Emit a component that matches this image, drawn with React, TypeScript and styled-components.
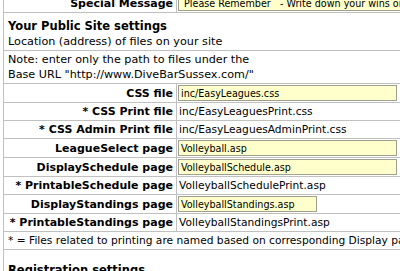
import styled, { createGlobalStyle } from 'styled-components'

type Field = {
  label: string
  value: string
  editable?: boolean
  boxWidth?: number
}

const fields: Field[] = [
  { label: 'CSS file', value: 'inc/EasyLeagues.css', editable: true, boxWidth: 219 },
  { label: '* CSS Print file', value: 'inc/EasyLeaguesPrint.css' },
  { label: '* CSS Admin Print file', value: 'inc/EasyLeaguesAdminPrint.css' },
  { label: 'LeagueSelect page', value: 'Volleyball.asp', editable: true, boxWidth: 219 },
  { label: 'DisplaySchedule page', value: 'VolleyballSchedule.asp', editable: true, boxWidth: 219 },
  { label: '* PrintableSchedule page', value: 'VolleyballSchedulePrint.asp' },
  { label: 'DisplayStandings page', value: 'VolleyballStandings.asp', editable: true, boxWidth: 139 },
  { label: '* PrintableStandings page', value: 'VolleyballStandingsPrint.asp' },
]

function App() {
  return (
    <>
      <GlobalStyle />
      <SettingsTable>
        <colgroup>
          <col style={{ width: 173 }} />
          <col />
        </colgroup>
        <tbody>
          <tr>
            <LabelCell>Special Message</LabelCell>
            <ValueCell>
              <TextBox readOnly boxWidth={420} value=" Please Remember   - Write down your wins or losses" />
            </ValueCell>
          </tr>
          <tr>
            <SectionCell colSpan={2}>
              <SectionTitle>Your Public Site settings</SectionTitle>
              <NoteText>Location (address) of files on your site</NoteText>
            </SectionCell>
          </tr>
          <tr>
            <NoteCell colSpan={2}>
              <NoteText>Note: enter only the path to files under the</NoteText>
              <NoteText>Base URL "http://www.DiveBarSussex.com/"</NoteText>
            </NoteCell>
          </tr>
          {fields.map((f) => (
            <tr key={f.label}>
              <LabelCell>{f.label}</LabelCell>
              <ValueCell>
                {f.editable ? (
                  <TextBox readOnly boxWidth={f.boxWidth ?? 219} value={f.value} />
                ) : (
                  f.value
                )}
              </ValueCell>
            </tr>
          ))}
          <tr>
            <NoteCell colSpan={2}>
              <FootText>
                * = Files related to printing are named based on corresponding Display page name
              </FootText>
            </NoteCell>
          </tr>
          <tr>
            <SectionCell colSpan={2} $gap={13}>
              <SectionTitle>Registration settings</SectionTitle>
              <NoteText>Registration form options</NoteText>
            </SectionCell>
          </tr>
        </tbody>
      </SettingsTable>
    </>
  )
}

const GlobalStyle = createGlobalStyle`
  html, body {
    margin: 0;
    padding: 0;
    overflow: hidden;
    background: #ffffff;
  }
  body {
    font-family: 'DejaVu Sans', Verdana, sans-serif;
    color: #000000;
  }
`

const SettingsTable = styled.table`
  border-collapse: collapse;
  table-layout: fixed;
  width: 640px;
  margin: -7px 0 0 3px;
  font-size: 11px;
  line-height: 15px;

  td {
    border: 1px solid #c0c0c0;
  }
`

const LabelCell = styled.td`
  padding: 1px 3px 1px 2px;
  text-align: right;
  font-weight: bold;
  font-size: 11px;
  line-height: 15px;
  white-space: nowrap;
  vertical-align: middle;
`

const ValueCell = styled.td`
  padding: 1px 1px 1px 2px;
  font-size: 10.67px;
  line-height: 15px;
  white-space: nowrap;
  vertical-align: middle;
`

const TextBox = styled.input<{ boxWidth: number }>`
  display: block;
  box-sizing: border-box;
  width: ${(p) => p.boxWidth}px;
  height: 16px;
  margin: 0 0 0 -1px;
  padding: 0 2px;
  border: 1px solid #a0a090;
  background: #ffffcc;
  font-family: 'DejaVu Sans Condensed', 'Liberation Sans', sans-serif;
  font-size: 10.67px;
  color: #000000;
  outline: none;
`

const SectionCell = styled.td<{ $gap?: number }>`
  padding: ${(p) => p.$gap ?? 6}px 4px 1px 4px;
  white-space: nowrap;
`

const NoteCell = styled.td`
  padding: 1px 4px;
  white-space: nowrap;
`

const SectionTitle = styled.div`
  font-weight: bold;
  font-size: 11.5px;
  line-height: 15px;
`

const NoteText = styled.div`
  font-size: 11.2px;
  line-height: 15px;
`

const FootText = styled.div`
  font-size: 10.67px;
  line-height: 15px;
`

export default App
